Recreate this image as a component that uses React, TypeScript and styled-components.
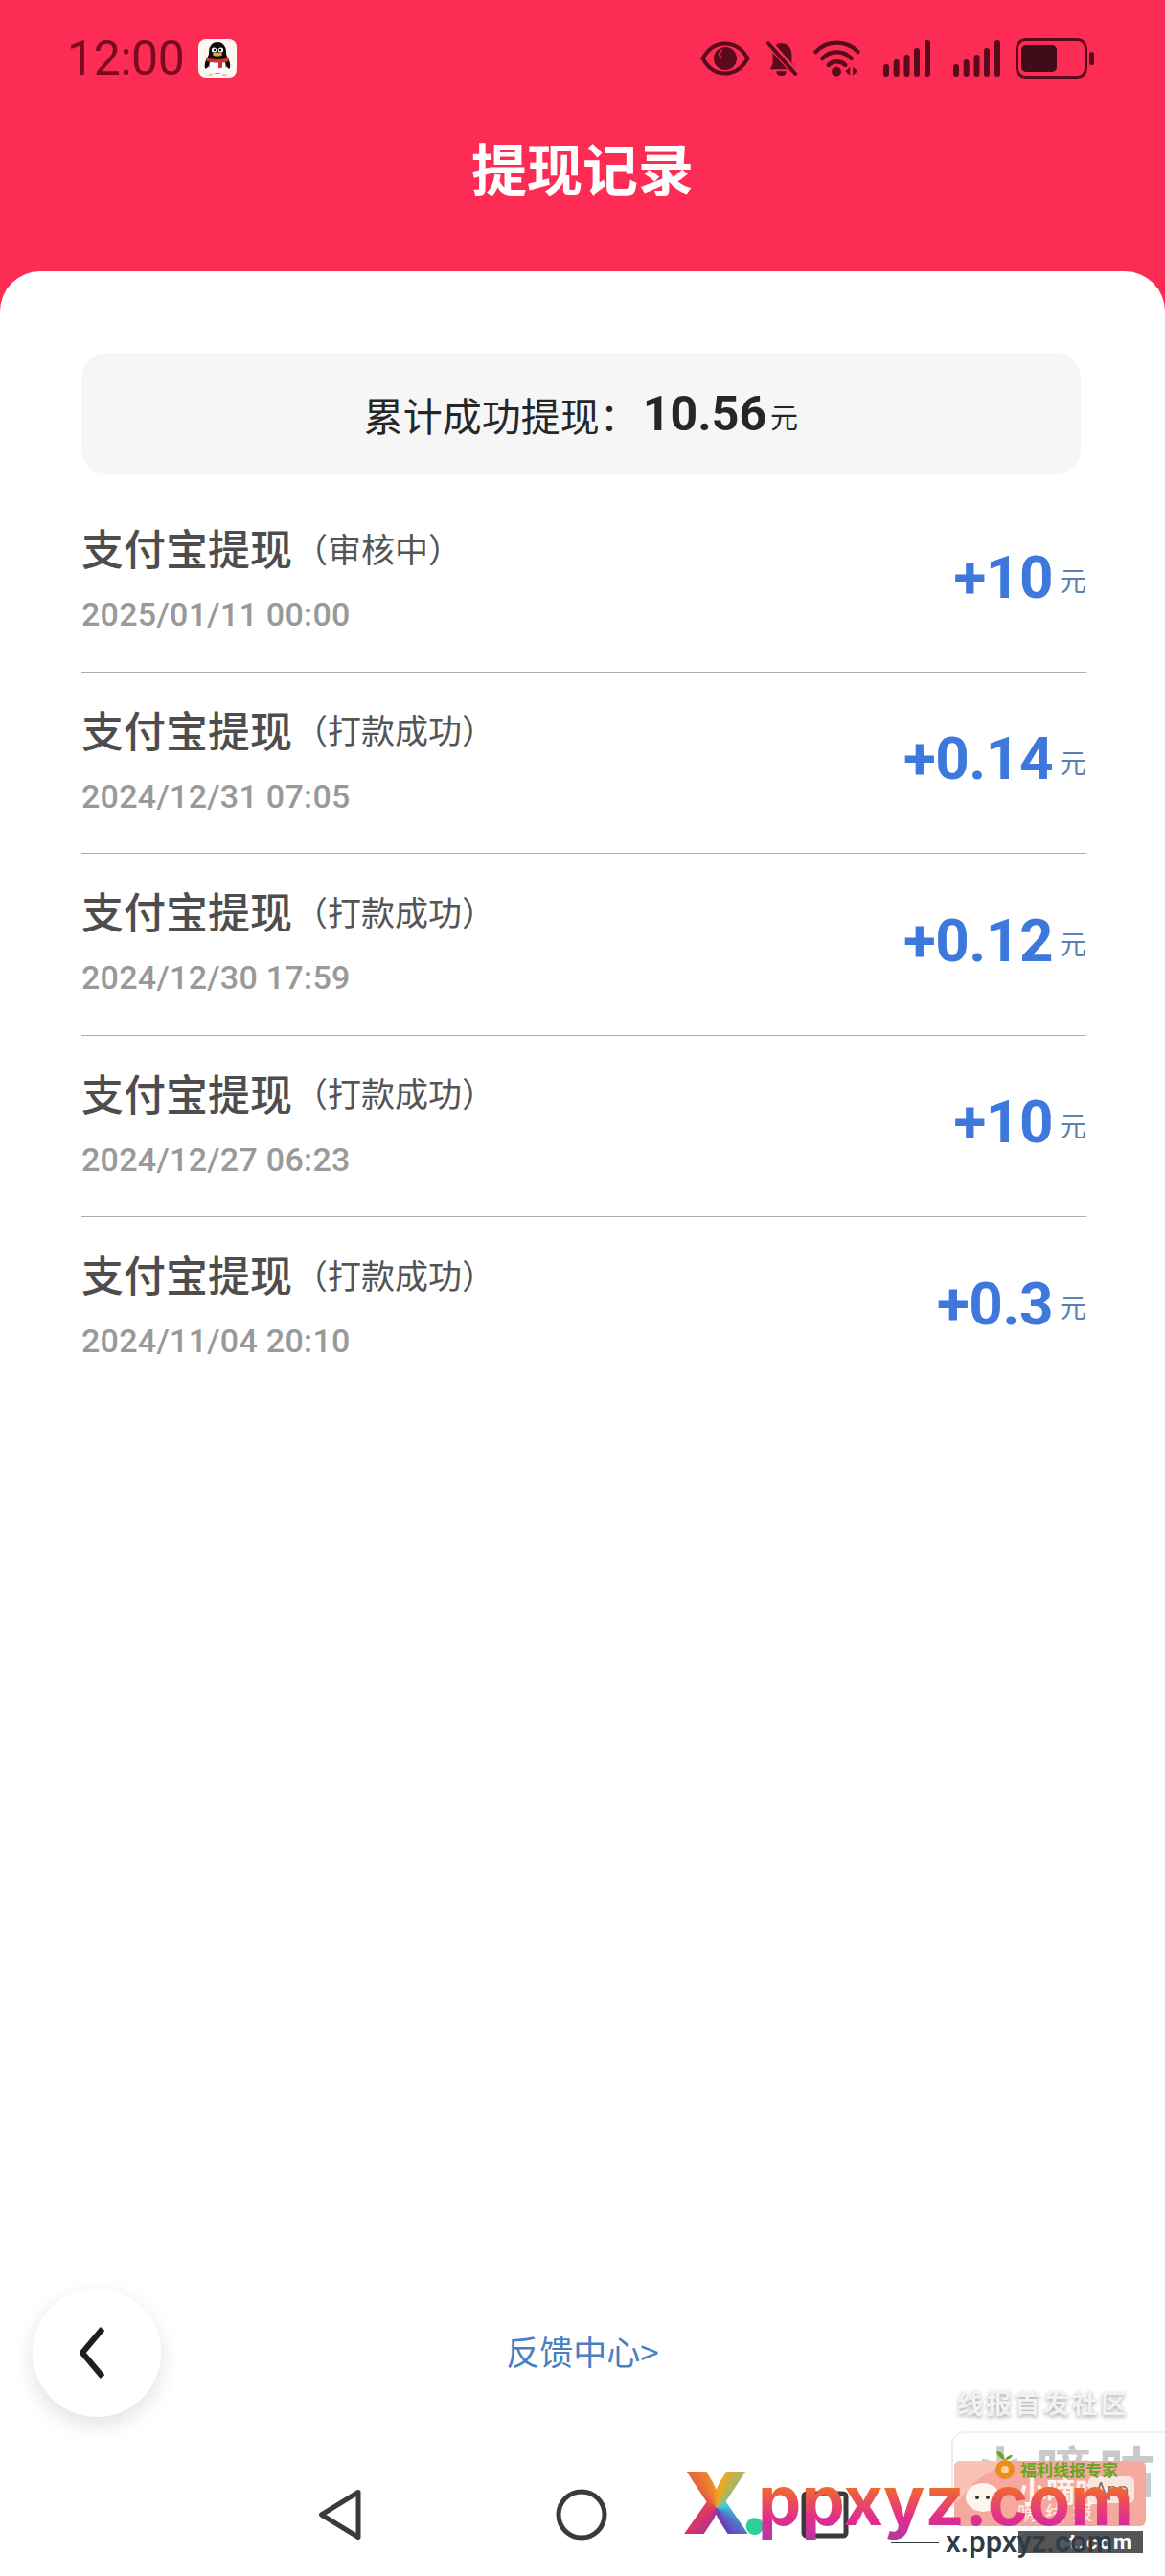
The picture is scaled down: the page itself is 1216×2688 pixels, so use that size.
import styled, { createGlobalStyle } from "styled-components";

const GlobalStyle = createGlobalStyle`
    html, body {
        margin: 0;
        padding: 0;
        background: #ffffff;
    }
    * {
        box-sizing: border-box;
    }
`;

const latin = `Roboto, "Noto Sans CJK SC", sans-serif`;
const cjk = `"Noto Sans CJK SC", "Noto Sans", sans-serif`;

const Page = styled.div`
    position: relative;
    width: 1216px;
    height: 2688px;
    display: flex;
    flex-direction: column;
    overflow: hidden;
    background: #fd2c54;
    font-family: ${cjk};
`;

const StatusBar = styled.div`
    height: 122px;
    padding: 0 74px 0 70px;
    display: flex;
    align-items: center;
    flex-shrink: 0;
`;

const Clock = styled.span`
    font-family: ${latin};
    font-size: 50px;
    line-height: 1;
    color: #7a0a22;
    letter-spacing: -0.4px;
    margin-right: 14px;
`;

const StatusIcons = styled.div`
    margin-left: auto;
    display: flex;
    align-items: center;
    gap: 16px;
`;

const SignalSvg = styled.svg`
    margin-left: 8px;
`;

const TitleBar = styled.h1`
    margin: 0 0 55px;
    height: 106px;
    line-height: 104px;
    text-align: center;
    font-size: 58px;
    font-weight: 600;
    color: #ffffff;
    flex-shrink: 0;
`;

const Card = styled.main`
    flex: 1;
    display: flex;
    flex-direction: column;
    background: #ffffff;
    border-radius: 42px 42px 0 0;
`;

const Content = styled.div`
    flex: 1;
    padding: 85px 82px 0 85px;
`;

const Summary = styled.div`
    width: 1043px;
    height: 127px;
    border-radius: 26px;
    background: #f6f6f6;
    display: flex;
    align-items: center;
    justify-content: center;
    color: #262626;
    font-size: 41px;
`;

const SummaryValue = styled.span`
    font-family: ${latin};
    font-size: 50px;
    font-weight: 700;
    margin: 0 4px;
`;

const SummaryUnit = styled.span`
    font-size: 29px;
    margin-top: 4px;
`;

const List = styled.div`
    margin-top: 17px;
`;

const Row = styled.div`
    height: 189.6px;
    display: flex;
    justify-content: space-between;
    border-bottom: 1px solid #adadad;
    &:last-child {
        border-bottom: none;
    }
`;

const RowInfo = styled.div`
    padding-top: 32px;
`;

const RowTitle = styled.div`
    display: flex;
    align-items: center;
    height: 54px;
    font-size: 44px;
    font-weight: 500;
    color: #4d4d4d;
`;

const RowStatus = styled.span`
    font-size: 35px;
    font-weight: 400;
    margin-left: 2px;
    color: #555555;
`;

const RowDate = styled.div`
    margin-top: 25px;
    font-family: ${latin};
    font-size: 34px;
    line-height: 36px;
    font-weight: 500;
    letter-spacing: 0.3px;
    color: #999999;
`;

const Amount = styled.div`
    padding-top: 59px;
    display: flex;
    align-items: center;
    height: 121px;
    color: #3f78dd;
    font-family: ${latin};
    font-size: 62px;
    font-weight: 700;
    letter-spacing: -0.5px;
`;

const AmountUnit = styled.span`
    font-family: ${cjk};
    font-size: 28px;
    font-weight: 400;
    letter-spacing: 0;
    color: #5a80b8;
    margin: 6px 0 0 7px;
`;

const Footer = styled.div`
    display: grid;
    grid-template-columns: 1fr auto 1fr;
    align-items: center;
    padding: 0 34px;
    margin-bottom: 1px;
`;

const BackButton = styled.button`
    width: 134px;
    height: 134px;
    padding: 0 10px 0 0;
    border: none;
    border-radius: 50%;
    background: #ffffff;
    box-shadow: 0 8px 22px rgba(0, 0, 0, 0.12);
    display: flex;
    align-items: center;
    justify-content: center;
`;

const FeedbackLink = styled.a`
    font-size: 35px;
    color: #4a7fc1;
    text-decoration: none;
    margin-bottom: 5px;
`;

const NavBar = styled.nav`
    height: 165px;
    display: flex;
    justify-content: center;
    align-items: flex-start;
    gap: 202px;
    padding: 74px 0 0 2px;
`;

/* stamps laid over the bottom right corner */
const Stamps = styled.div`
    position: absolute;
    left: 700px;
    top: 2440px;
    width: 516px;
    height: 248px;
    pointer-events: none;
`;

const ChannelText = styled.div`
    position: absolute;
    left: 299px;
    top: 50px;
    font-size: 27px;
    font-weight: 700;
    line-height: 34px;
    letter-spacing: 3px;
    white-space: nowrap;
    color: #f2f2f2;
    text-shadow: 0 2px 4px rgba(0, 0, 0, 0.35);
`;

const GhostCard = styled.div`
    position: absolute;
    left: 293px;
    top: 97px;
    width: 223px;
    height: 80px;
    border-left: 2px solid #ececec;
    border-top: 2px solid #f2f2f2;
    border-radius: 14px 0 0 0;
    padding: 6px 0 0 20px;
    font-size: 58px;
    font-weight: 700;
    line-height: 62px;
    letter-spacing: 8px;
    color: #c9c9c9;
    white-space: nowrap;
`;

const SalmonBanner = styled.div`
    position: absolute;
    left: 296px;
    top: 128px;
    width: 200px;
    height: 68px;
    border-radius: 6px;
    background: #f5a99e;
    color: #fff3ef;
    overflow: hidden;
`;

const BannerMascot = styled.svg`
    position: absolute;
    left: 0;
    top: 0;
`;

const BannerTitle = styled.span`
    position: absolute;
    left: 66px;
    top: 12px;
    font-size: 30px;
    font-weight: 700;
    line-height: 36px;
    white-space: nowrap;
`;

const BannerApp = styled.span`
    position: absolute;
    right: 12px;
    top: 16px;
    padding: 0 6px;
    border-radius: 6px;
    background: #fbe6df;
    font-family: ${latin};
    font-size: 20px;
    line-height: 28px;
    color: #8a6a62;
`;

const BannerLine = styled.span`
    position: absolute;
    left: 66px;
    top: 42px;
    font-size: 20px;
    line-height: 24px;
    letter-spacing: 9px;
    white-space: nowrap;
`;

const ExpertMark = styled.svg`
    position: absolute;
    left: 336px;
    top: 118px;
`;

const ExpertTag = styled.div`
    position: absolute;
    left: 365px;
    top: 127px;
    font-size: 17px;
    font-weight: 700;
    line-height: 20px;
    color: #6aa51f;
    white-space: nowrap;
`;

const LogoMark = styled.span`
    position: absolute;
    left: 12px;
    top: 126px;
    font-family: Inter, sans-serif;
    font-size: 90px;
    font-weight: 900;
    line-height: 92px;
    background: conic-gradient(from 300deg at 50% 55%, #e24a4a, #f2a81d, #2fd0dc, #6a3cb8, #d8326e, #e24a4a);
    -webkit-background-clip: text;
    background-clip: text;
    color: transparent;
`;

const LogoDot = styled.span`
    position: absolute;
    left: 71px;
    top: 126px;
    font-family: Inter, sans-serif;
    font-size: 90px;
    font-weight: 900;
    line-height: 92px;
    color: #2fcf9c;
`;

const LogoWord = styled.span`
    position: absolute;
    left: 91px;
    top: 124px;
    font-family: Inter, sans-serif;
    font-size: 72px;
    font-weight: 700;
    line-height: 90px;
    white-space: nowrap;
    background: linear-gradient(180deg, #f4711f 30%, #e02c92 72%, #a83ea0 100%);
    -webkit-background-clip: text;
    background-clip: text;
    color: transparent;
`;

const DarkStrip = styled.div`
    position: absolute;
    left: 363px;
    top: 201px;
    width: 130px;
    height: 23px;
    background: #555555;
    color: #ffffff;
    font-family: ${latin};
    font-size: 22px;
    font-weight: 700;
    line-height: 23px;
    letter-spacing: 2px;
    text-align: right;
    padding-right: 10px;
    white-space: nowrap;
    overflow: hidden;
`;

const SiteLine = styled.div`
    position: absolute;
    left: 230px;
    top: 212px;
    width: 50px;
    height: 2px;
    background: #2f3b46;
`;

const SiteText = styled.div`
    position: absolute;
    left: 287px;
    top: 200px;
    font-family: ${latin};
    font-size: 31px;
    font-weight: 500;
    line-height: 26px;
    white-space: nowrap;
    color: #2f3b46;
`;

const statusInk = "#5a0a1d";

const QQIcon = () => (
    <svg width="40" height="40" viewBox="0 0 40 40">
        <rect width="40" height="40" rx="8" fill="#fdf8f2" />
        <path d="M20 3c-6 0-9 5-9 10 0 2 0 3-1 5-2 3-4 8-3 12 1 2 3-1 4-2 1 5 5 8 9 8s8-3 9-8c1 1 3 4 4 2 1-4-1-9-3-12-1-2-1-3-1-5 0-5-3-10-9-10z" fill="#0c0c0c" />
        <path d="M12 24c2-2 14-2 16 0 1 4 1 8-1 10-2 2-12 2-14 0-2-2-2-6-1-10z" fill="#ffffff" />
        <circle cx="16.5" cy="11" r="2.6" fill="#ffffff" />
        <circle cx="23.5" cy="11" r="2.6" fill="#ffffff" />
        <circle cx="17" cy="11" r="1.2" fill="#0c0c0c" />
        <circle cx="23" cy="11" r="1.2" fill="#0c0c0c" />
        <ellipse cx="20" cy="15.5" rx="5" ry="2" fill="#eda32c" />
        <path d="M9 19c5 2.500 17 2.500 22 0 1 1 1 3 0 4-2 1-4 1.500-6 1.500v5l-4 1v-6c-4 0-9-.5-12-1.500-1-1-1-3 0-4z" fill="#d2322f" />
        <path d="M13 36l-4 1.500h7zM27 36l4 1.500h-7z" fill="#eda32c" />
    </svg>
);

const EyeIcon = () => (
    <svg width="52" height="36" viewBox="0 0 52 36">
        <path d="M2.500 18C8 8 16 2.500 26 2.500S44 8 49.500 18C44 28 36 33.500 26 33.500S8 28 2.500 18z" fill="none" stroke={statusInk} strokeWidth="4" />
        <circle cx="26" cy="18" r="12" fill={statusInk} />
        <path d="M24 8c-3 3-4 6-1 9-2 0-4-1-4-3 0-3 2-5 5-6z" fill="#fd2c54" />
    </svg>
);

const BellOffIcon = () => (
    <svg width="34" height="40" viewBox="0 0 36 40">
        <path d="M17 3c7 0 12 5 12 13v8l5 8H5l3-6V13c0-5 4-10 9-10z" fill={statusInk} />
        <path d="M12 34h11c0 4-3 5-5.500 5S12 38 12 34z" fill={statusInk} />
        <path d="M3 2l31 35" stroke="#fd2c54" strokeWidth="8" />
        <path d="M3 3l30 34" stroke={statusInk} strokeWidth="4" strokeLinecap="round" />
    </svg>
);

const WifiIcon = () => (
    <svg width="49" height="40" viewBox="0 0 50 40">
        <path d="M2.500 13C14 0 36 0 47.500 13" fill="none" stroke={statusInk} strokeWidth="4.500" strokeLinecap="round" />
        <path d="M9.500 20C18 11 32 11 40.500 20" fill="none" stroke={statusInk} strokeWidth="4.500" strokeLinecap="round" />
        <path d="M16 27c5-5 13-5 18 0" fill="none" stroke={statusInk} strokeWidth="4.500" strokeLinecap="round" />
        <circle cx="24.500" cy="34" r="5" fill={statusInk} />
        <path d="M39 29v9l-5-4.500zM42 29v9l5-4.500z" fill={statusInk} />
    </svg>
);

const SignalIcon = () => (
    <SignalSvg width="49" height="40" viewBox="0 0 49 40">
        <rect x="0" y="26" width="6" height="13" rx="3" fill={statusInk} />
        <rect x="10.700" y="21" width="6" height="18" rx="3" fill={statusInk} />
        <rect x="21.500" y="16" width="6" height="23" rx="3" fill={statusInk} />
        <rect x="32" y="9" width="6" height="30" rx="3" fill={statusInk} />
        <rect x="43" y="1" width="6" height="38" rx="3" fill={statusInk} />
    </SignalSvg>
);

const BatteryIcon = () => (
    <svg width="82" height="42" viewBox="0 0 82 42">
        <rect x="1.500" y="1.500" width="72" height="39" rx="9" fill="none" stroke={statusInk} strokeWidth="3" />
        <rect x="6" y="7" width="37" height="28" rx="5" fill="#3f0c1a" />
        <rect x="77" y="14" width="5" height="14" rx="2.500" fill={statusInk} />
    </svg>
);

const records = [
    { status: "审核中", date: "2025/01/11 00:00", amount: "+10" },
    { status: "打款成功", date: "2024/12/31 07:05", amount: "+0.14" },
    { status: "打款成功", date: "2024/12/30 17:59", amount: "+0.12" },
    { status: "打款成功", date: "2024/12/27 06:23", amount: "+10" },
    { status: "打款成功", date: "2024/11/04 20:10", amount: "+0.3" },
];

const App = () => {
    return (
        <Page>
            <GlobalStyle />
            <StatusBar>
                <Clock>12:00</Clock>
                <QQIcon />
                <StatusIcons>
                    <EyeIcon />
                    <BellOffIcon />
                    <WifiIcon />
                    <SignalIcon />
                    <SignalIcon />
                    <BatteryIcon />
                </StatusIcons>
            </StatusBar>
            <TitleBar>提现记录</TitleBar>
            <Card>
                <Content>
                    <Summary>
                        累计成功提现：
                        <SummaryValue>10.56</SummaryValue>
                        <SummaryUnit>元</SummaryUnit>
                    </Summary>
                    <List>
                        {records.map((r) => (
                            <Row key={r.date}>
                                <RowInfo>
                                    <RowTitle>
                                        支付宝提现
                                        <RowStatus>（{r.status}）</RowStatus>
                                    </RowTitle>
                                    <RowDate>{r.date}</RowDate>
                                </RowInfo>
                                <Amount>
                                    {r.amount}
                                    <AmountUnit>元</AmountUnit>
                                </Amount>
                            </Row>
                        ))}
                    </List>
                </Content>
                <Footer>
                    <BackButton>
                        <svg width="30" height="56" viewBox="0 0 30 56">
                            <path d="M26 3L5 28l21 25" fill="none" stroke="#1f1f1f" strokeWidth="6" strokeLinejoin="round" />
                        </svg>
                    </BackButton>
                    <FeedbackLink>反馈中心&gt;</FeedbackLink>
                </Footer>
                <NavBar>
                    <svg width="46" height="54" viewBox="0 0 46 54">
                        <path d="M42 3.500L3.500 27 42 50.500z" fill="none" stroke="#3a3a3a" strokeWidth="5" strokeLinejoin="round" />
                    </svg>
                    <svg width="54" height="54" viewBox="0 0 54 54">
                        <circle cx="27" cy="27" r="24" fill="none" stroke="#3a3a3a" strokeWidth="5" />
                    </svg>
                    <svg width="50" height="54" viewBox="0 0 50 54">
                        <rect x="3" y="5" width="44" height="44" rx="3" fill="none" stroke="#3a3a3a" strokeWidth="5" />
                    </svg>
                </NavBar>
            </Card>
            <Stamps>
                <ChannelText>线报首发社区</ChannelText>
                <GhostCard>小嘀咕</GhostCard>
                <SalmonBanner>
                    <BannerMascot width="200" height="68" viewBox="0 0 200 68">
                        <path d="M0 0h50c-6 10-18 14-26 20S8 40 0 44z" fill="#f8c3b6" />
                        <ellipse cx="30" cy="38" rx="18" ry="15" fill="#fdf6ef" />
                        <circle cx="24" cy="38" r="2" fill="#333333" />
                        <circle cx="35" cy="38" r="2" fill="#333333" />
                    </BannerMascot>
                    <BannerTitle>小嘀咕</BannerTitle>
                    <BannerApp>App</BannerApp>
                    <BannerLine>嘀线报</BannerLine>
                </SalmonBanner>
                <ExpertMark width="26" height="30" viewBox="0 0 26 30">
                    <circle cx="13" cy="19" r="10" fill="#f08a18" />
                    <circle cx="13" cy="19" r="4" fill="#fbd49a" />
                    <path d="M13 9C9 8 5 5 4 0c5 0 8 3 9 9zM13 9c1-3 4-5 8-5-1 3-4 5-8 5z" fill="#6aa51f" />
                </ExpertMark>
                <ExpertTag>福利线报专家</ExpertTag>
                <DarkStrip>t.com</DarkStrip>
                <SiteLine />
                <SiteText>x.ppxyz.com</SiteText>
                <LogoMark>X</LogoMark>
                <LogoDot>.</LogoDot>
                <LogoWord>ppxyz.com</LogoWord>
            </Stamps>
        </Page>
    );
};

export default App;
